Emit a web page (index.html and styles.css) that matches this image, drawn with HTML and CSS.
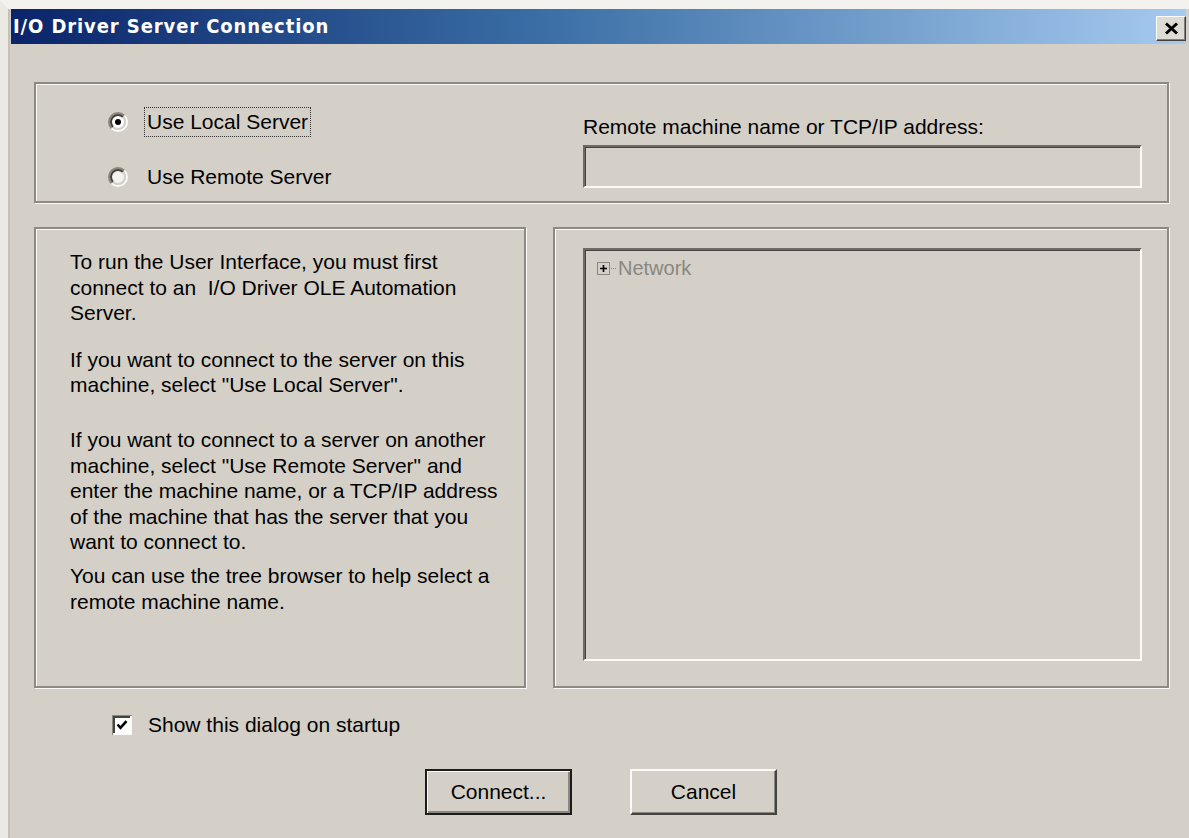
FILE: index.html
```html
<!DOCTYPE html>
<html lang="en">
<head>
<meta charset="utf-8">
<title>I/O Driver Server Connection</title>
<link rel="stylesheet" href="styles.css">
</head>
<body>
<div class="window">
  <div class="titlebar">
    <span class="title">I/O Driver Server Connection</span>
    <button class="close" type="button" aria-label="Close">
      <svg width="15" height="13" viewBox="0 0 15 13"><path d="M2 1.5 L13 11.5 M13 1.5 L2 11.5" stroke="#000" stroke-width="3" fill="none"/></svg>
    </button>
  </div>

  <div class="dialog">
    <div class="group server-group">
      <div class="radios">
        <div class="radio-row">
          <svg class="radio" width="20" height="20" viewBox="0 0 20 20">
            <circle cx="10" cy="10" r="7" fill="#fff"/>
            <path d="M3.636 16.364 A9 9 0 0 1 16.364 3.636" stroke="#8a877f" stroke-width="2" fill="none"/>
            <path d="M16.364 3.636 A9 9 0 0 1 3.636 16.364" stroke="#fbfaf8" stroke-width="2" fill="none"/>
            <path d="M5.05 14.95 A7 7 0 0 1 14.95 5.05" stroke="#45433f" stroke-width="2" fill="none"/>
            <path d="M14.95 5.05 A7 7 0 0 1 5.05 14.95" stroke="#d4d0c8" stroke-width="2" fill="none"/>
            <circle cx="10" cy="10" r="3" fill="#000"/>
          </svg>
          <span class="radio-label focus">Use Local Server</span>
        </div>
        <div class="radio-row">
          <svg class="radio" width="20" height="20" viewBox="0 0 20 20">
            <circle cx="10" cy="10" r="7" fill="#f4f3f0"/>
            <path d="M3.636 16.364 A9 9 0 0 1 16.364 3.636" stroke="#8a877f" stroke-width="2" fill="none"/>
            <path d="M16.364 3.636 A9 9 0 0 1 3.636 16.364" stroke="#fbfaf8" stroke-width="2" fill="none"/>
            <path d="M5.05 14.95 A7 7 0 0 1 14.95 5.05" stroke="#45433f" stroke-width="2" fill="none"/>
            <path d="M14.95 5.05 A7 7 0 0 1 5.05 14.95" stroke="#d4d0c8" stroke-width="2" fill="none"/>
          </svg>
          <span class="radio-label">Use Remote Server</span>
        </div>
      </div>
      <div class="remote">
        <div class="field-label">Remote machine name or TCP/IP address:</div>
        <div class="field sunken"></div>
      </div>
    </div>

    <div class="panes">
      <div class="group info">
        <p class="p1">To run the User Interface, you must first<br>connect to an&nbsp; I/O Driver OLE Automation<br>Server.</p>
        <p class="p2">If you want to connect to the server on this<br>machine, select "Use Local Server".</p>
        <p class="p3">If you want to connect to a server on another<br>machine, select "Use Remote Server" and<br>enter the machine name, or a TCP/IP address<br>of the machine that has the server that you<br>want to connect to.</p>
        <p class="p4">You can use the tree browser to help select a<br>remote machine name.</p>
      </div>
      <div class="group browser">
        <div class="tree sunken">
          <div class="node">
            <span class="expander"><svg width="13" height="13" viewBox="0 0 13 13"><rect x="0.5" y="0.5" width="12" height="12" fill="none" stroke="#8a877f"/><path d="M3 6.5 H10 M6.5 3 V10" stroke="#000" stroke-width="1.6"/></svg></span>
            <span class="connector"></span>
            <span class="node-label">Network</span>
          </div>
        </div>
      </div>
    </div>

    <div class="startup">
      <svg class="check" width="20" height="20" viewBox="0 0 20 20">
        <rect x="0" y="0" width="20" height="20" fill="#fbfaf8"/>
        <path d="M0 20 V0 H20" stroke="#8a877f" stroke-width="2" fill="none"/>
        <rect x="2" y="2" width="16" height="16" fill="#fff"/>
        <path d="M2 18 V2 H18" stroke="#45433f" stroke-width="2" fill="none"/>
        <path d="M5.5 9.5 L8.5 12.8 L14.5 6.2" stroke="#000" stroke-width="2.6" fill="none"/>
      </svg>
      <span class="startup-label">Show this dialog on startup</span>
    </div>

    <div class="buttons">
      <button class="btn default" type="button">Connect...</button>
      <button class="btn" type="button">Cancel</button>
    </div>
  </div>
</div>
</body>
</html>
```

FILE: styles.css
```css
html, body {
  margin: 0;
  padding: 0;
  background: #d4d0c8;
}

body {
  font-family: "Liberation Sans", Arial, sans-serif;
  font-size: 21px;
  color: #000;
}

/* outer window frame */
.window {
  box-sizing: border-box;
  width: 1189px;
  height: 838px;
  border-top: 9px solid #f3f2ee;
  border-left: 8px solid #ebe9e4;
  padding: 0 3px 0 3px;
  background: #d4d0c8;
  box-shadow: inset 2px 0 0 #c4c1b9;
}

/* caption bar */
.titlebar {
  height: 35px;
  display: flex;
  align-items: flex-start;
  justify-content: space-between;
  background: linear-gradient(to right, #0a246a 0%, #3a6ea5 45%, #a6caf0 100%);
}

.title {
  font-family: "DejaVu Sans Condensed", "DejaVu Sans", sans-serif;
  font-weight: bold;
  font-size: 20px;
  letter-spacing: 0.9px;
  color: #fff;
  line-height: 35px;
  padding-left: 2px;
}

.close {
  box-sizing: border-box;
  width: 30px;
  height: 25px;
  margin-top: 7px;
  padding: 0;
  display: flex;
  align-items: center;
  justify-content: center;
  background: #dedbd4;
  border: 1px solid;
  border-color: #fff #404040 #404040 #fff;
  box-shadow: inset -1px -1px 0 #808080;
}

/* dialog client area */
.dialog {
  padding: 0 17px 0 23px;
}

.group {
  box-sizing: border-box;
  border: 2px solid #8d8a83;
  box-shadow: inset 1px 1px 0 #fbfaf7, 1px 1px 0 #fbfaf7;
}

.server-group {
  margin-top: 38px;
  height: 121px;
  display: flex;
  align-items: flex-start;
}

.radios {
  padding: 23px 0 0 72px;
  display: flex;
  flex-direction: column;
  gap: 25px;
}

.radio-row {
  height: 30px;
  display: flex;
  align-items: center;
}

.radio {
  flex: none;
}

.radio-label {
  margin-left: 17px;
  padding: 0 2px;
  line-height: 28px;
}

.focus {
  outline: 1px dotted #333;
}

.remote {
  margin-left: auto;
  margin-right: 25px;
  width: 559px;
  padding-top: 31px;
}

.field-label {
  line-height: 24px;
  margin-bottom: 6px;
}

.sunken {
  box-sizing: border-box;
  border: 2px solid;
  border-color: #6e6b64 #fbfaf7 #fbfaf7 #6e6b64;
  box-shadow: inset 1px 1px 0 #45433f;
  background: #d4d0c8;
}

.field {
  height: 43px;
}

/* lower panes */
.panes {
  margin-top: 24px;
  display: flex;
  gap: 27px;
  height: 461px;
}

.info {
  width: 492px;
  padding: 20px 0 0 34px;
}

.info p {
  margin: 0;
  line-height: 25.6px;
}

.info .p2 { margin-top: 21px; }
.info .p3 { margin-top: 29px; }
.info .p4 { margin-top: 8px; }

.browser {
  flex: 1;
  padding: 19px 0 0 28px;
}

.tree {
  width: 559px;
  height: 413px;
  padding: 6px 0 0 12px;
}

.node {
  display: flex;
  align-items: center;
  height: 24px;
}

.expander {
  display: flex;
}

.connector {
  width: 5px;
  border-top: 1px dotted #8a877f;
  margin: 0 2px 0 1px;
}

.node-label {
  color: #8a877f;
  font-size: 20px;
}

/* startup checkbox */
.startup {
  margin-top: 24px;
  margin-left: 78px;
  height: 26px;
  display: flex;
  align-items: center;
}

.startup-label {
  margin-left: 16px;
}

/* command buttons */
.buttons {
  margin-top: 31px;
  padding-left: 391px;
  display: flex;
  gap: 58px;
}

.btn {
  box-sizing: border-box;
  width: 147px;
  height: 46px;
  font-family: "Liberation Sans", Arial, sans-serif;
  font-size: 21px;
  color: #000;
  background: #d4d0c8;
  border: 2px solid;
  border-color: #fbfaf7 #45433f #45433f #fbfaf7;
  box-shadow: inset -1px -1px 0 #8a877f;
  padding: 0;
}

.btn.default {
  border: 2px solid #1c1c1c;
  box-shadow: inset 1px 1px 0 #fbfaf7, inset -2px -2px 0 #8a877f;
}
```
